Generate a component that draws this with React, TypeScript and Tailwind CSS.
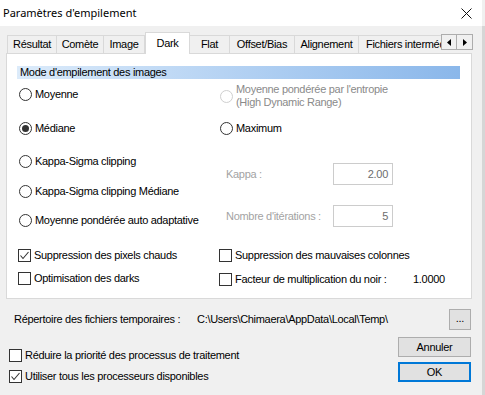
import React from 'react';

const ui = { fontFamily: '"Liberation Sans", Arial, sans-serif' };

function Radio({ label, checked, disabled }: { label: React.ReactNode; checked?: boolean; disabled?: boolean }) {
  return (
    <div className="flex items-center">
      <span
        className={`ml-[2px] grid h-[13px] w-[13px] shrink-0 place-items-center rounded-full border bg-white ${
          disabled ? 'border-[#cfcfcf]' : 'border-[#333]'
        }`}
      >
        {checked ? <span className="h-[7px] w-[7px] rounded-full bg-[#333]" /> : null}
      </span>
      <span className={`ml-[3px] leading-[13px] ${disabled ? 'text-[#8a8a8a]' : 'text-black'}`}>{label}</span>
    </div>
  );
}

function Check({ label, checked }: { label: string; checked?: boolean }) {
  return (
    <div className="flex h-[14px] items-center">
      <span className="grid h-[13px] w-[13px] shrink-0 place-items-center border border-[#333] bg-white">
        {checked ? (
          <svg width="11" height="11" viewBox="0 0 11 11">
            <path d="M1.5 5.5 L4 8.5 L9.5 2" fill="none" stroke="#333" strokeWidth="1.1" />
          </svg>
        ) : null}
      </span>
      <span className="ml-[3px] whitespace-nowrap">{label}</span>
    </div>
  );
}

function Field({ label, value }: { label: string; value: string }) {
  return (
    <div className="flex h-[22px] items-center">
      <span className="ml-[8px] w-[107px] text-[#a3a3a3]">{label}</span>
      <span className="flex h-[22px] w-[60px] items-center justify-end border border-[#cccccc] bg-white pr-[4px] text-[#6d6d6d]">
        {value}
      </span>
    </div>
  );
}

const tabs = [
  { name: 'Résultat', w: 'w-[50px]' },
  { name: 'Comète', w: 'w-[47px]' },
  { name: 'Image', w: 'w-[41px]' },
  { name: 'Dark', w: 'w-[45px]', active: true },
  { name: 'Flat', w: 'w-[40px]' },
  { name: 'Offset/Bias', w: 'w-[65px]' },
  { name: 'Alignement', w: 'w-[64px]' },
];

export default function App() {
  return (
    <div className="flex h-[395px] w-[485px] overflow-hidden bg-[#f0f0f0] text-[11px] tracking-[-0.3px] text-black" style={ui}>
      <div className="flex w-[482px] flex-col">
        {/* title bar */}
        <div className="flex h-[26px] shrink-0 items-center justify-between bg-white pl-[3px] pr-[10px]">
          <span className="text-[11px] tracking-normal" style={{ fontFamily: '"Noto Sans", "Open Sans", sans-serif' }}>
            Paramètres d'empilement
          </span>
          <svg width="11" height="11" viewBox="0 0 11 11">
            <path d="M0.5 0.5 L10.5 10.5 M10.5 0.5 L0.5 10.5" stroke="#111" strokeWidth="1" />
          </svg>
        </div>

        {/* tabs */}
        <div className="flex h-[27px] shrink-0 items-end pl-[7px]">
          {tabs.map((t) =>
            t.active ? (
              <div
                key={t.name}
                className={`relative z-10 -mb-px flex h-[22px] ${t.w} items-start justify-center border border-b-0 border-[#d9d9d9] bg-white pt-[2px]`}
              >
                {t.name}
              </div>
            ) : (
              <div
                key={t.name}
                className={`flex h-[18px] ${t.w} items-center justify-center border border-b-0 border-l-0 border-[#d9d9d9] first:border-l`}
              >
                {t.name}
              </div>
            )
          )}
          <div className="flex h-[18px] w-[82px] items-center overflow-hidden whitespace-nowrap border-t border-[#d9d9d9] pl-[7px]">
            Fichiers intermédiaires
          </div>
          <div className="mb-[3px] flex">
            <span className="grid h-[16px] w-[16px] place-items-center border border-[#adadad] bg-[#f0f0f0]">
              <svg width="4" height="7" viewBox="0 0 4 7">
                <path d="M4 0 L0 3.5 L4 7 Z" fill="#000" />
              </svg>
            </span>
            <span className="grid h-[16px] w-[16px] place-items-center border border-l-0 border-[#adadad] bg-[#f0f0f0]">
              <svg width="4" height="7" viewBox="0 0 4 7">
                <path d="M0 0 L4 3.5 L0 7 Z" fill="#000" />
              </svg>
            </span>
          </div>
        </div>

        {/* tab panel */}
        <div className="ml-[6px] h-[246px] w-[466px] shrink-0 border border-[#d9d9d9] bg-white">
          <div className="ml-[10px] mr-[11px] mt-[12px] h-[13px] bg-linear-to-r from-[#dcebfa] to-[#8ab7ea] pl-[3px] leading-[13px]">
            Mode d'empilement des images
          </div>
          <div className="ml-[10px] flex">
            <div className="flex w-[201px] flex-col">
              <div className="mt-[9px] h-[14px]"><Radio label="Moyenne" /></div>
              <div className="mt-[20px] h-[14px]"><Radio label="Médiane" checked /></div>
              <div className="mt-[19px] h-[14px]"><Radio label="Kappa-Sigma clipping" /></div>
              <div className="mt-[16px] h-[14px]"><Radio label="Kappa-Sigma clipping Médiane" /></div>
              <div className="mt-[15px] h-[14px]"><Radio label="Moyenne pondérée auto adaptative" /></div>
              <div className="ml-[1px] mt-[20px]"><Check label="Suppression des pixels chauds" checked /></div>
              <div className="ml-[1px] mt-[9px]"><Check label="Optimisation des darks" /></div>
            </div>
            <div className="flex flex-col">
              <div className="mt-[4px] h-[26px]">
                <Radio
                  disabled
                  label={
                    <>
                      Moyenne pondérée par l'entropie
                      <br />
                      (High Dynamic Range)
                    </>
                  }
                />
              </div>
              <div className="mt-[13px] h-[14px]"><Radio label="Maximum" /></div>
              <div className="mt-[27px]"><Field label="Kappa :" value="2.00" /></div>
              <div className="mt-[20px]"><Field label="Nombre d'itérations :" value="5" /></div>
              <div className="ml-[1px] mt-[21px]"><Check label="Suppression des mauvaises colonnes" /></div>
              <div className="ml-[1px] mt-[9px] flex items-center">
                <div className="w-[194px]"><Check label="Facteur de multiplication du noir :" /></div>
                <span>1.0000</span>
              </div>
            </div>
          </div>
        </div>

        {/* temp folder */}
        <div className="mt-[10px] flex h-[21px] shrink-0 items-center">
          <span className="ml-[14px] w-[183px]">Répertoire des fichiers temporaires :</span>
          <span>C:\Users\Chimaera\AppData\Local\Temp\</span>
          <span className="ml-auto mr-[11px] flex h-[21px] w-[22px] items-center justify-center border border-[#adadad] bg-[#e1e1e1] pb-[3px]">
            ...
          </span>
        </div>

        {/* bottom */}
        <div className="flex">
          <div className="flex flex-col pl-[9px]">
            <div className="mt-[18px]"><Check label="Réduire la priorité des processus de traitement" /></div>
            <div className="mt-[7px]"><Check label="Utiliser tous les processeurs disponibles" checked /></div>
          </div>
          <div className="ml-auto mr-[11px] flex w-[73px] flex-col">
            <button className="mt-[7px] h-[20px] border border-[#adadad] bg-[#e1e1e1] leading-none">Annuler</button>
            <button className="mt-[5px] h-[20px] border-2 border-[#0078d7] bg-[#e1e1e1] leading-none">OK</button>
          </div>
        </div>
      </div>
      <div className="mt-[26px] w-[3px] bg-[#d6d6d6]" />
    </div>
  );
}
